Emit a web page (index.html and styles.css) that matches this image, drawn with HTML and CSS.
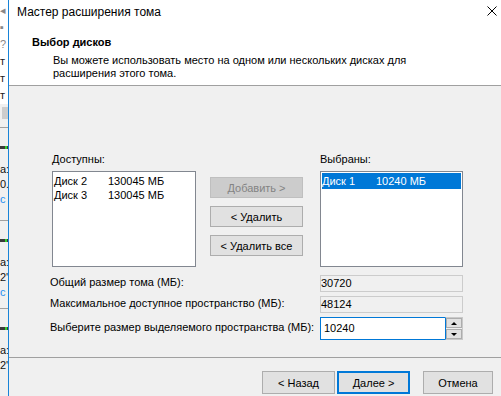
FILE: index.html
```html
<!DOCTYPE html>
<html lang="ru">
<head>
    <meta charset="UTF-8">
    <title>Мастер расширения тома</title>
    <link rel="stylesheet" href="styles.css">
</head>
<body>
    <div class="desk">
        <div class="backwin">
            <div class="bw-tree">
                <div class="bw-row gray">◂</div>
                <div class="bw-row gray">▪</div>
                <div class="bw-row gray">?</div>
                <div class="bw-row">т</div>
                <div class="bw-row">т</div>
                <div class="bw-row">т</div>
            </div>
            <div class="bw-scroll"></div>
            <div class="bw-disk first">
                <div class="bw-bar"></div>
                <div class="bw-text">а:</div>
                <div class="bw-text">0.</div>
                <div class="bw-text blue">с</div>
            </div>
            <div class="bw-disk">
                <div class="bw-bar"></div>
                <div class="bw-text">а:</div>
                <div class="bw-text">2'</div>
                <div class="bw-text blue">с</div>
            </div>
            <div class="bw-disk">
                <div class="bw-bar"></div>
                <div class="bw-text">а:</div>
                <div class="bw-text">2'</div>
            </div>
        </div>

        <div class="wizard">
            <div class="top">
                <div class="titlebar">
                    <span class="title">Мастер расширения тома</span>
                    <svg class="close" width="10" height="10" viewBox="0 0 10 10">
                        <path d="M0.5 0.5 L9.5 9.5 M9.5 0.5 L0.5 9.5" stroke="#000" stroke-width="1" fill="none"/>
                    </svg>
                </div>
                <div class="head">
                    <div class="head-title">Выбор дисков</div>
                    <div class="head-desc">Вы можете использовать место на одном или нескольких дисках для<br>расширения этого тома.</div>
                </div>
            </div>

            <div class="content">
                <div class="lists">
                    <div class="list-col">
                        <div class="list-label">Доступны:</div>
                        <div class="listbox">
                            <div class="list-row"><span class="disk-name">Диск 2</span>130045 МБ</div>
                            <div class="list-row"><span class="disk-name">Диск 3</span>130045 МБ</div>
                        </div>
                    </div>
                    <div class="actions">
                        <button class="btn disabled">Добавить &gt;</button>
                        <button class="btn">&lt; Удалить</button>
                        <button class="btn">&lt; Удалить все</button>
                    </div>
                    <div class="list-col right">
                        <div class="list-label">Выбраны:</div>
                        <div class="listbox">
                            <div class="list-row selected"><span class="disk-name">Диск 1</span>10240 МБ</div>
                        </div>
                    </div>
                </div>

                <div class="fields">
                    <div class="field-label">Общий размер тома (МБ):</div>
                    <div class="readonly">30720</div>
                    <div class="field-label">Максимальное доступное пространство (МБ):</div>
                    <div class="readonly">48124</div>
                    <div class="field-label low">Выберите размер выделяемого пространства (МБ):</div>
                    <div class="spin">
                        <div class="spin-input">10240</div>
                        <div class="spin-buttons">
                            <div class="spin-btn"><span class="arrow up"></span></div>
                            <div class="spin-btn"><span class="arrow down"></span></div>
                        </div>
                    </div>
                </div>
            </div>

            <div class="footer">
                <button class="btn big">&lt; Назад</button>
                <button class="btn big default">Далее &gt;</button>
                <button class="btn big cancel">Отмена</button>
            </div>
        </div>
    </div>
</body>
</html>
```

FILE: styles.css
```css
body {
    margin: 0;
    font-family: "Liberation Sans", Arial, sans-serif;
    font-size: 11px;
    color: #000;
    background: #f0f0f0;
    overflow: hidden;
}

.desk {
    display: flex;
    height: 396px;
}

/* window behind the wizard */
.backwin {
    width: 8px;
    flex: none;
    overflow: hidden;
    background: #f0f0f0;
    display: flex;
    flex-direction: column;
    white-space: nowrap;
}

.bw-tree {
    height: 110px;
    background: #fff;
    padding-top: 2px;
    box-sizing: border-box;
}

.bw-row {
    line-height: 17px;
    color: #222;
}

.bw-row.gray {
    color: #888;
}

.bw-scroll {
    height: 14px;
    margin-top: 3px;
    margin-left: 2px;
    background: #cdcdcd;
}

.bw-disk {
    border-top: 1px solid #a0a0a0;
    height: 99px;
    padding-top: 18px;
    box-sizing: border-box;
    background: #f0f0f0;
}

.bw-disk.first {
    margin-top: 8px;
    height: 105px;
}

.bw-bar {
    height: 3px;
    margin-bottom: 13px;
    background: linear-gradient(to right, #3a3a3a 5px, #2fd12f 5px, #2fd12f 7px, #3a3a3a 7px);
}

.bw-text {
    line-height: 15px;
    color: #111;
}

.bw-text.blue {
    color: #1e8ff0;
}

/* wizard */
.wizard {
    flex: 1;
    min-width: 0;
    border-left: 1px solid #1883d7;
    display: flex;
    flex-direction: column;
    background: #f0f0f0;
}

.top {
    height: 85px;
    background: #fff;
    border-bottom: 1px solid #a0a0a0;
    flex: none;
}

.titlebar {
    display: flex;
    justify-content: space-between;
    align-items: flex-start;
    height: 30px;
    padding: 4px 4px 0 8px;
    box-sizing: border-box;
}

.title {
    font-size: 12px;
    line-height: 16px;
}

.close {
    margin-top: 2px;
}

.head {
    padding: 4px 0 0 23px;
}

.head-title {
    font-weight: bold;
    line-height: 16px;
}

.head-desc {
    padding-left: 21px;
    margin-top: 4px;
    line-height: 13px;
}

.content {
    height: 271px;
    flex: none;
    border-bottom: 1px solid #a0a0a0;
}

.lists {
    display: flex;
    margin-top: 66px;
    padding-left: 43px;
}

.list-col {
    width: 144px;
}

.list-col.right {
    margin-left: 17px;
    width: 143px;
}

.list-label {
    line-height: 15px;
    margin-bottom: 4px;
}

.listbox {
    height: 96px;
    background: #fff;
    border: 1px solid #828790;
    box-sizing: border-box;
    padding: 1px;
}

.list-row {
    line-height: 14px;
    white-space: nowrap;
}

.list-row:first-child {
    margin-top: 1px;
}

.list-row.selected {
    margin-top: 0;
    line-height: 16px;
    background: #0078d7;
    color: #fff;
}

.disk-name {
    display: inline-block;
    width: 54px;
}

.actions {
    margin-left: 14px;
    padding-top: 25px;
    width: 93px;
    display: flex;
    flex-direction: column;
    gap: 8px;
}

.btn {
    font-family: inherit;
    font-size: 11px;
    color: #000;
    height: 21px;
    padding: 0;
    margin: 0;
    background: #e1e1e1;
    border: 1px solid #adadad;
    border-radius: 0;
    box-sizing: border-box;
}

.btn.disabled {
    background: #cccccc;
    border-color: #bfbfbf;
    color: #838383;
}

.fields {
    display: grid;
    grid-template-columns: 270px 143px;
    grid-template-rows: 17px 17px 23px;
    row-gap: 4px;
    margin-top: 8px;
    padding-left: 41px;
}

.field-label {
    line-height: 15px;
    white-space: nowrap;
}

.field-label.low {
    padding-top: 3px;
}

.readonly {
    border: 1px solid #cccccc;
    line-height: 15px;
    box-sizing: border-box;
}

.spin {
    display: flex;
    height: 23px;
}

.spin-input {
    flex: 1;
    background: #fff;
    border: 1px solid #0078d7;
    border-right: none;
    padding: 3px 0 0 3px;
    line-height: 15px;
    box-sizing: border-box;
}

.spin-buttons {
    width: 18px;
    border: 1px solid #c9c9c9;
    border-left-color: #0078d7;
    box-sizing: border-box;
    display: flex;
    flex-direction: column;
    justify-content: space-between;
    background: #f0f0f0;
}

.spin-btn {
    height: 10px;
    background: #e1e1e1;
    border: 1px solid #adadad;
    box-sizing: border-box;
    display: flex;
    align-items: center;
    justify-content: center;
}

.arrow {
    width: 0;
    height: 0;
    border-left: 3px solid transparent;
    border-right: 3px solid transparent;
}

.arrow.up {
    border-bottom: 3px solid #000;
}

.arrow.down {
    border-top: 3px solid #000;
}

.footer {
    display: flex;
    align-items: flex-start;
    padding: 13px 0 0 253px;
    gap: 2px;
}

.btn.big {
    width: 73px;
    height: 23px;
}

.btn.default {
    border: 2px solid #0078d7;
}

.btn.cancel {
    margin-left: 11px;
    width: 70px;
}
```
